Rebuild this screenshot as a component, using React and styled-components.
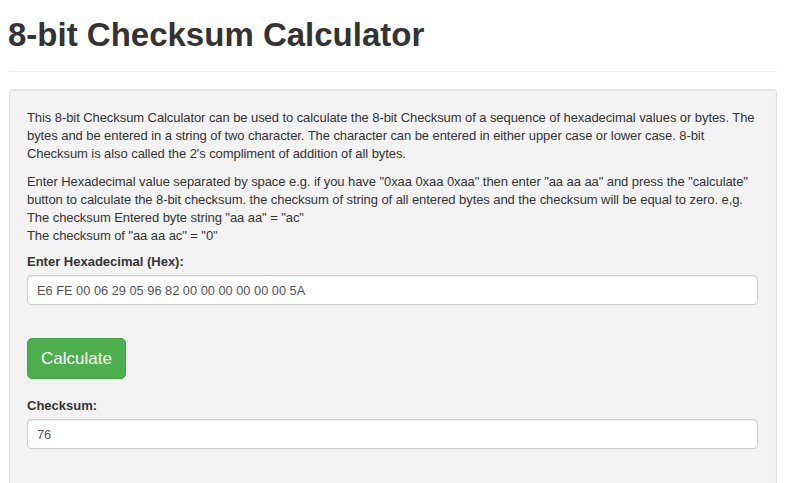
import React from "react";
import styled, { createGlobalStyle } from "styled-components";

const GlobalStyle = createGlobalStyle`
  * { box-sizing: border-box; }
  body {
    margin: 0;
    background: #fff;
    font-family: "Liberation Sans", Arial, Helvetica, sans-serif;
    font-size: 13px;
    line-height: 1.42857;
    color: #333;
  }
`;

const intro = [
  "This 8-bit Checksum Calculator can be used to calculate the 8-bit Checksum of a sequence of hexadecimal values or bytes. The",
  "bytes and be entered in a string of two character. The character can be entered in either upper case or lower case. 8-bit",
  "Checksum is also called the 2's compliment of addition of all bytes.",
];

const usage = [
  'Enter Hexadecimal value separated by space e.g. if you have "0xaa 0xaa 0xaa" then enter "aa aa aa" and press the "calculate"',
  "button to calculate the 8-bit checksum. the checksum of string of all entered bytes and the checksum will be equal to zero. e,g.",
  'The checksum Entered byte string "aa aa" = "ac"',
  'The checksum of "aa aa ac" = "0"',
];

const App = () => {
  return (
    <>
      <GlobalStyle />
      <Page>
        <Title>8-bit Checksum Calculator</Title>
        <Rule />
        <Well>
          <Text>
            {intro.map((line) => (
              <Line key={line}>{line}</Line>
            ))}
          </Text>
          <Text>
            {usage.map((line) => (
              <Line key={line}>{line}</Line>
            ))}
          </Text>

          <Label>Enter Hexadecimal (Hex):</Label>
          <Field defaultValue="E6 FE 00 06 29 05 96 82 00 00 00 00 00 00 5A" />

          <Button>Calculate</Button>

          <Label>Checksum:</Label>
          <Field defaultValue="76" />
        </Well>
      </Page>
    </>
  );
};

export default App;

const Page = styled.div`
  padding: 0 23px 0 9px;
  width: 800px;
`;

const Title = styled.h1`
  margin: 0 0 0 -1px;
  padding: 15px 0 0 0;
  font-size: 33px;
  font-weight: bold;
  line-height: 40px;
  color: #333;
`;

const Rule = styled.hr`
  margin: 16px 0 17px;
  border: 0;
  border-top: 1px solid #eee;
`;

const Well = styled.div`
  background: #f3f3f3;
  border: 1px solid #e3e3e3;
  border-radius: 4px;
  box-shadow: inset 0 1px 1px rgba(0, 0, 0, 0.05);
  padding: 19px 18px 30px 17px;
  min-height: 420px;
`;

const Text = styled.p`
  margin: 0 0 10px;
  line-height: 18px;
  letter-spacing: -0.075px;

  & + & {
    margin-bottom: 9px;
  }
`;

const Line = styled.span`
  display: block;
  white-space: nowrap;
`;

const Label = styled.label`
  display: block;
  font-weight: bold;
  line-height: 16px;
  margin: 0 0 5px;
`;

const Field = styled.input`
  display: block;
  width: 100%;
  height: 30px;
  padding: 6px 9px;
  font-family: inherit;
  font-size: 12.8px;
  color: #555;
  background: #fff;
  border: 1px solid #ccc;
  border-radius: 4px;
  box-shadow: inset 0 1px 1px rgba(0, 0, 0, 0.075);
  outline: none;
  margin-bottom: 33px;
`;

const Button = styled.button`
  display: block;
  height: 41px;
  padding: 0 13px;
  margin-bottom: 19px;
  font-family: inherit;
  font-size: 17px;
  color: #fff;
  background: #4cae4c;
  border: 1px solid #46a046;
  border-radius: 5px;
  cursor: pointer;
`;
